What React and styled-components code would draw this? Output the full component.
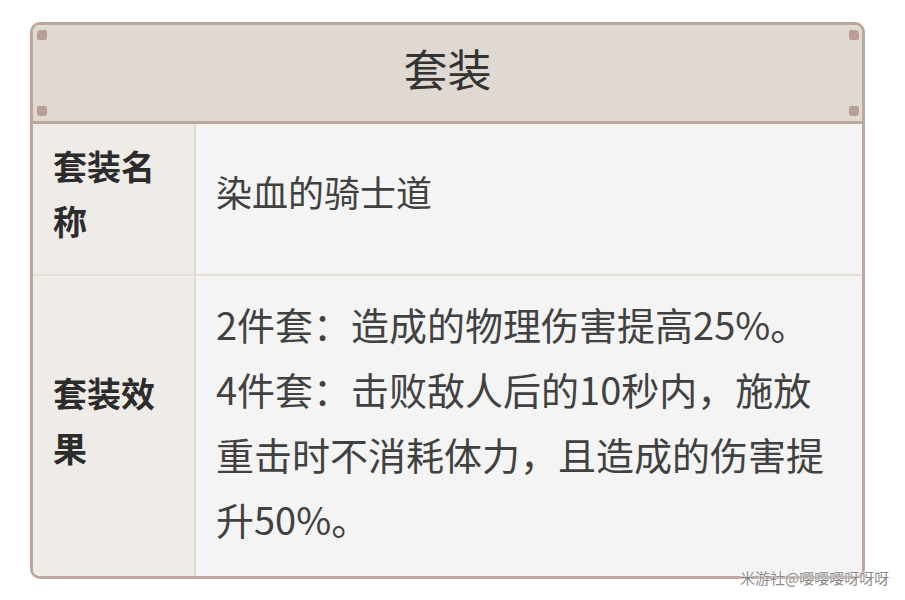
import React from "react";
import styled, { createGlobalStyle } from "styled-components";

const Global = createGlobalStyle`
  html, body { margin: 0; padding: 0; background: #ffffff; }
  body { font-family: "Noto Sans CJK SC", "Noto Sans", sans-serif; }
`;

const Page = styled.div`
  position: relative;
  width: 905px;
  height: 600px;
  padding: 22px 0 0 30px;
  box-sizing: border-box;
`;

const Card = styled.div`
  width: 835px;
  box-sizing: border-box;
  border: 3px solid #bba79e;
  border-radius: 10px;
  overflow: hidden;
  background: #f4f4f4;
`;

const Header = styled.div`
  position: relative;
  height: 99px;
  box-sizing: border-box;
  padding-bottom: 10px;
  background: #e0d9d2;
  border-bottom: 3px solid #bba79e;
  display: flex;
  align-items: center;
  justify-content: center;
  font-size: 44px;
  color: #333333;
`;

const Corner = styled.span`
  position: absolute;
  width: 10px;
  height: 10px;
  background: #b99e95;
  border-radius: 2px;
  ${(p) => (p.$top ? "top: 5px;" : "bottom: 5px;")}
  ${(p) => (p.$left ? "left: 4px;" : "right: 3px;")}
  ${(p) =>
    p.$top && p.$left
      ? "border-top-left-radius: 4px;"
      : p.$top
      ? "border-top-right-radius: 4px;"
      : p.$left
      ? "border-bottom-left-radius: 4px;"
      : "border-bottom-right-radius: 4px;"}
`;

const Row = styled.div`
  display: grid;
  grid-template-columns: 163px 1fr;
  border-bottom: ${(p) => (p.$last ? "none" : "2px solid #e5dfd8")};
`;

const Label = styled.div`
  background: #efebe6;
  border-right: 2px solid #e2dbd3;
  padding: 14px 20px 26px;
  display: flex;
  align-items: center;
  font-size: 34px;
  line-height: 55px;
  font-weight: 700;
  color: #2c2c2c;
`;

const Value = styled.div`
  background: #f4f4f4;
  padding: ${(p) => (p.$size < 38 ? "12px 20px 28px" : "15px 20px 25px")};
  display: flex;
  flex-direction: column;
  justify-content: center;
  font-size: ${(p) => p.$size}px;
  line-height: 65px;
  color: #414141;
`;

const Watermark = styled.div`
  position: absolute;
  left: 740px;
  top: 568px;
  font-size: 15px;
  line-height: 20px;
  color: #8c8c8c;
  text-shadow: 0 0 2px #fff, 0 0 1px #fff;
  white-space: nowrap;
`;

export default function App() {
  return (
    <>
      <Global />
      <Page>
        <Card>
          <Header>
            套装
            <Corner $top $left />
            <Corner $top />
            <Corner $left />
            <Corner />
          </Header>
          <Row>
            <Label>套装名称</Label>
            <Value $size={36}>染血的骑士道</Value>
          </Row>
          <Row $last>
            <Label>套装效果</Label>
            <Value $size={38}>
              <span>2件套：造成的物理伤害提高25%。</span>
              <span>4件套：击败敌人后的10秒内，施放重击时不消耗体力，且造成的伤害提升50%。</span>
            </Value>
          </Row>
        </Card>
        <Watermark>米游社@嘤嘤嘤呀呀呀</Watermark>
      </Page>
    </>
  );
}
